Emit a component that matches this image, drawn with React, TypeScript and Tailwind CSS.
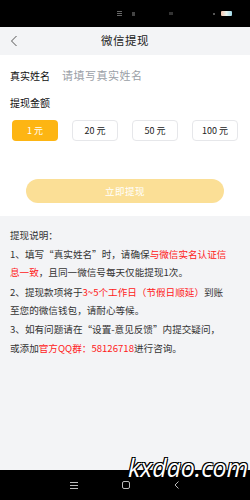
import React from "react";

const font = { fontFamily: '"Noto Sans CJK SC", "Noto Sans", sans-serif' };

function Amount({ label, active }: { label: string; active?: boolean }) {
  return (
    <div
      className={
        active
          ? "w-[46px] h-[21px] rounded-[4px] bg-[#fdb513] text-white flex items-center justify-center text-[9px]"
          : "w-[46px] h-[21px] rounded-[4px] bg-white border border-[#e6e7ea] text-[#222] flex items-center justify-center text-[9px]"
      }
    >
      {label}
    </div>
  );
}

export default function App() {
  const red = "text-[#ff1a1a]";
  return (
    <div className="w-[250px] h-[500px] flex flex-col bg-[#f3f4f6] relative overflow-hidden" style={font}>
      {/* status bar */}
      <div className="h-[27px] bg-black flex items-center justify-end pr-[18px] gap-[6px] shrink-0">
        <div className="flex items-center gap-[10px] mr-[28px]">
          <div className="flex flex-col gap-[1px]">
            <div className="w-[5px] h-[1px] bg-[#666]" />
            <div className="w-[5px] h-[1px] bg-[#666]" />
            <div className="w-[5px] h-[1px] bg-[#666]" />
          </div>
          <div className="w-[3px] h-[4px] bg-[#444]" />
        </div>
        <div className="w-[4px] h-[3px] bg-[#333] mr-[34px]" />
        <div className="w-[2px] h-[2px] bg-[#555]" />
        <div className="w-[11px] h-[5px] rounded-[1px] bg-gradient-to-r from-[#f3c6b0] via-[#e8f5f0] to-[#9fd8e8]" />
      </div>

      {/* header */}
      <div className="h-[28px] bg-[#f3f4f6] grid grid-cols-[40px_1fr_40px] items-center shrink-0">
        <div className="pl-[10px] flex items-center">
          <svg width="8" height="12" viewBox="0 0 8 12" fill="none">
            <path d="M6.5 1 L1.5 6 L6.5 11" stroke="#555" strokeWidth="1" />
          </svg>
        </div>
        <div className="text-center text-[11.5px] text-[#222] tracking-[0.5px]">微信提现</div>
        <div />
      </div>

      {/* white form */}
      <div className="h-[161px] bg-white px-[10px] flex flex-col shrink-0">
        <div className="mt-[13px] h-[14px] flex items-center">
          <span className="text-[10px] text-[#111] w-[52px]">真实姓名</span>
          <span className="text-[11px] text-[#9aa0a6] tracking-[0.5px]">请填写真实姓名</span>
        </div>
        <div className="mt-[13px] h-[14px] flex items-center text-[10px] text-[#111]">提现金额</div>
        <div className="mt-[11px] flex items-center gap-[14px] pl-[2px]">
          <Amount label="1 元" active />
          <Amount label="20 元" />
          <Amount label="50 元" />
          <Amount label="100 元" />
        </div>
        <div className="mt-[38px] mx-[16px] h-[24px] rounded-full bg-[#fbdf96] flex items-center justify-center text-white text-[9.5px] tracking-[0.5px]">
          立即提现
        </div>
      </div>

      {/* instructions */}
      <div className="pt-[10px] px-[10px] text-[9.6px] leading-[18.6px] text-[#333] whitespace-nowrap">
        <div>提现说明：</div>
        <div>
          1、填写“真实姓名”时，请确保<span className={red}>与微信实名认证信</span>
        </div>
        <div>
          <span className={red}>息一致</span>，且同一微信号每天仅能提现1次。
        </div>
        <div className="mt-[1px]">
          2、提现款项将于<span className={red}>3~5个工作日（节假日顺延）</span>到账
        </div>
        <div>至您的微信钱包，请耐心等候。</div>
        <div>3、如有问题请在“设置-意见反馈”内提交疑问，</div>
        <div>
          或添加<span className={red}>官方QQ群：58126718</span>进行咨询。
        </div>
      </div>

      <div className="flex-1" />

      {/* bottom nav */}
      <div className="h-[30px] bg-black flex items-center justify-center gap-[44px] shrink-0">
        <svg width="8" height="7" viewBox="0 0 8 7">
          <path d="M0 0.5 H8 M0 3.5 H8 M0 6.5 H8" stroke="#bbb" strokeWidth="1" />
        </svg>
        <svg width="8" height="8" viewBox="0 0 8 8">
          <rect x="0.5" y="0.5" width="7" height="7" rx="1.5" fill="none" stroke="#bbb" strokeWidth="1" />
        </svg>
        <svg width="6" height="8" viewBox="0 0 6 8">
          <path d="M4.5 0.5 L1 4 L4.5 7.5" fill="none" stroke="#bbb" strokeWidth="1" />
        </svg>
      </div>

      {/* watermark */}
      <div
        className="absolute left-[128px] top-[455px] text-[25px] text-white italic leading-none"
        style={{
          fontFamily: '"Open Sans", sans-serif',
          textShadow: "1px 1px 0 #000, -1px -1px 0 #000, 1px -1px 0 #000, -1px 1px 0 #000",
        }}
      >
        kxdao.com
      </div>
    </div>
  );
}
